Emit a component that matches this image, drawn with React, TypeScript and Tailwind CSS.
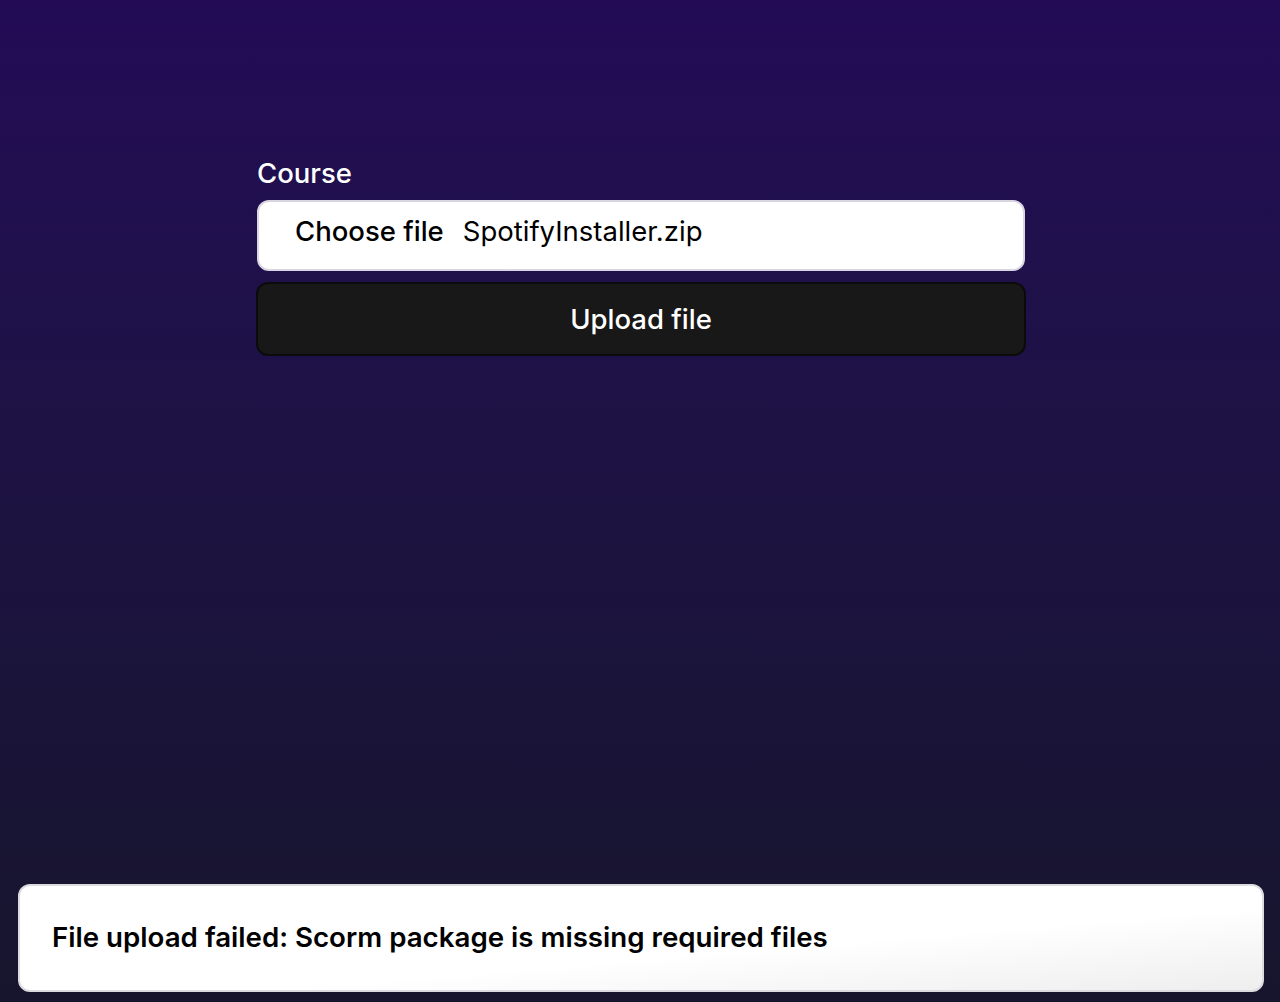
export default function App() {
  return (
    <div
      className="flex h-[1002px] w-full flex-col bg-gradient-to-b from-[#230b56] to-[#17152d] text-white"
      style={{ fontFamily: 'Inter, "Noto Sans", sans-serif' }}
    >
      <div className="flex flex-1 justify-center pl-[2px] pt-[156px]">
        <div className="flex w-[768px] flex-col">
          <label className="text-[27.5px] font-medium leading-[34px]">Course</label>
          <div className="mt-[10px] flex h-[71px] items-center rounded-[12px] border-2 border-[#d9d6e2] bg-white pb-[8px] pl-[36px] text-[27.5px] text-black">
            <span className="font-medium">Choose file</span>
            <span className="ml-[19px]">SpotifyInstaller.zip</span>
          </div>
          <button className="-mx-px mt-[11px] flex h-[74px] items-center justify-center rounded-[12px] border-2 border-[#0b0b0b] bg-[#181818] pt-[2px] text-[27.5px] font-medium text-white">
            Upload file
          </button>
        </div>
      </div>
      <div className="pb-[10px] pl-[18px] pr-[16px]">
        <div className="flex h-[108px] items-center rounded-[12px] border-2 border-[#dcdce0] bg-gradient-to-br from-white from-60% to-[#eeeeee] pl-[32px] text-[27.7px] font-semibold text-black">
          File upload failed: Scorm package is missing required files
        </div>
      </div>
    </div>
  );
}
